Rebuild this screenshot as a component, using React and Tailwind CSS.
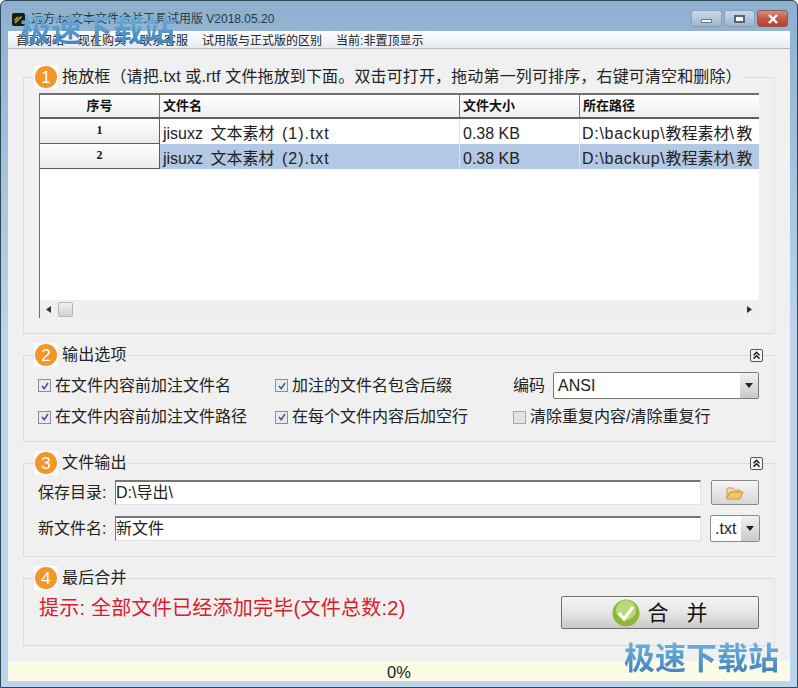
import React from 'react'

const cjk = "font-['Liberation_Sans','Noto_Sans_CJK_SC',sans-serif]"

const Badge = ({ n }) => (
	<span className="flex h-[24px] w-[24px] shrink-0 items-center justify-center bg-[#fbfbfb]">
		<span className="flex h-[22px] w-[22px] items-center justify-center rounded-full bg-[#f0962a] text-[17px] leading-none text-white">
			{n}
		</span>
	</span>
)

const Collapse = () => (
	<span className="flex h-[13px] w-[13px] items-center justify-center rounded-[2px] border border-[#555] bg-[#f4f4f4]">
		<svg width="9" height="9" viewBox="0 0 9 9" fill="none" stroke="#222" strokeWidth="1.5">
			<path d="M1.5 4.2 4.5 1.4 7.5 4.2M1.5 7.6 4.5 4.8 7.5 7.6" />
		</svg>
	</span>
)

// group box, the title row sits on the top border
const Group = ({ n, title, collapse, className, children }) => (
	<div className={`mx-[15px] border border-[#dcdcdc] border-r-[#e3e3e3] ${className}`}>
		<div className="-mt-[13px] flex h-[24px] items-center justify-between pr-[11px]">
			<div className="ml-[10px] flex items-center gap-[4px] bg-[#f0f0f0] pr-[1px]">
				<Badge n={n} />
				<span className="text-[16px] leading-[22px] tracking-[0.14px] text-[#222]">{title}</span>
			</div>
			{collapse && <Collapse />}
		</div>
		{children}
	</div>
)

const Check = ({ on, label, className }) => (
	<label className={`flex items-center gap-[4px] text-[16px] leading-[20px] text-[#222] ${className}`}>
		<span className={`flex h-[13px] w-[13px] items-center justify-center border ${on ? 'border-[#8a8f99] bg-[#e6eaf2]' : 'border-[#a8a8a8] bg-[#e2e2e2]'}`}>
			{on && (
				<svg width="10" height="10" viewBox="0 0 10 10" fill="none" stroke="#4a5a80" strokeWidth="1.6">
					<path d="M2 5 4.2 7.6 8 2" />
				</svg>
			)}
		</span>
		{label}
	</label>
)

const Arrow = () => (
	<span className="flex h-full w-[18px] items-center justify-center bg-gradient-to-b from-[#f2f2f2] to-[#c9c9c9]">
		<svg width="8" height="5" viewBox="0 0 8 5"><path d="M0 0h8L4 5z" fill="#222" /></svg>
	</span>
)

const rows = [
	{ id: 1, ext: '(1).txt' },
	{ id: 2, ext: '(2).txt', selected: true },
]

const FileTable = () => (
	<div className="ml-[15px] mr-[15px] mt-[4px] flex h-[225px] flex-col overflow-hidden border-l border-l-[#6f6f6f] border-t-2 border-t-[#6f6f6f] bg-white">
		<div className="flex h-[24px] shrink-0 border-b-2 border-b-[#5d5d5d] bg-gradient-to-b from-white to-[#eeeeee] text-[13px] font-bold leading-[22px] text-[#111]">
			<div className="w-[120px] border-r border-r-[#777] text-center">序号</div>
			<div className="w-[300px] border-r border-r-[#777] pl-[3px]">文件名</div>
			<div className="w-[120px] border-r border-r-[#777] pl-[3px]">文件大小</div>
			<div className="flex-1 pl-[3px]">所在路径</div>
		</div>
		{rows.map((row) => (
			<div key={row.id} className="flex h-[25px] shrink-0 text-[16px] leading-[29px] text-[#222]">
				<div className="w-[120px] shrink-0 border-b border-r border-[#5d5d5d] bg-gradient-to-b from-white to-[#ececec] text-center font-['Liberation_Serif'] text-[12px] font-bold leading-[22px] text-[#111]">
					{row.id}
				</div>
				<div className={`flex min-w-0 flex-1 ${row.selected ? 'bg-[#b3c8e4]' : 'bg-white'}`}>
					<div className="w-[300px] shrink-0 border-r border-r-[#e4e4e4] pl-[3px] [word-spacing:3px]">
						jisuxz 文本素材 <span className="tracking-[1px]">{row.ext}</span>
					</div>
					<div className="w-[120px] shrink-0 border-r border-r-[#e4e4e4] pl-[3px]">0.38 KB</div>
					<div className="min-w-0 flex-1 whitespace-nowrap pl-[2px]">
						<span className="tracking-[0.7px]">D:\backup\</span>教程素材<span className="tracking-[2.5px]">\</span>教
					</div>
				</div>
			</div>
		))}
		<div className="flex-1" />
		<div className="flex h-[18px] shrink-0 items-center bg-[#efefef] pl-[6px] pr-[7px] shadow-[0_1px_0_#e0e0e0]">
			<svg width="5" height="7" viewBox="0 0 5 7"><path d="M5 0v7L0 3.5z" fill="#333" /></svg>
			<span className="ml-[7px] h-[15px] w-[15px] rounded-[2px] border border-[#b5b5b5] bg-gradient-to-b from-[#f2f2f2] to-[#cfcfcf]" />
			<span className="flex-1" />
			<svg width="5" height="7" viewBox="0 0 5 7"><path d="M0 0v7l5-3.5z" fill="#333" /></svg>
		</div>
	</div>
)

const TextField = ({ value }) => (
	<div className="h-[25px] w-[586px] border-b border-l border-r border-t-2 border-b-[#e2e2e2] border-l-[#777] border-r-[#e2e2e2] border-t-[#777] bg-white text-[16px] leading-[21px] text-[#222]">
		{value}
	</div>
)

const Titlebar = () => (
	<div className="flex h-[30px] shrink-0 items-start justify-between pl-[11px] pr-[9px] pt-[9px]">
		<div className="mt-[1px] flex items-center gap-[6px]">
			<span className="flex h-[13px] w-[13px] items-center justify-center rounded-[2px] bg-[#1c1c14]">
				<svg width="11" height="11" viewBox="0 0 11 11" fill="none" stroke="#c9b93a" strokeWidth="1.4">
					<path d="M2 9 8.5 2.5M1.5 6.5 5 3" />
				</svg>
			</span>
			<span className="text-[12px] leading-[16px] text-[#2a3a4a]">远方.txt文本文件合并工具试用版 V2018.05.20</span>
		</div>
		<div className="flex gap-[2px]">
			<span className="flex h-[17px] w-[31px] items-center justify-center rounded-[3px] border border-[#8ca0b8] bg-gradient-to-b from-[#c9d8e8] via-[#b4c8dc] to-[#9db4cc]">
				<span className="mt-[4px] h-[4px] w-[11px] border border-[#6b7c90] bg-white" />
			</span>
			<span className="flex h-[17px] w-[31px] items-center justify-center rounded-[3px] border border-[#8ca0b8] bg-gradient-to-b from-[#c9d8e8] via-[#b4c8dc] to-[#9db4cc]">
				<span className="flex h-[8px] w-[11px] items-center justify-center border-2 border-[#55657a] bg-white" />
			</span>
			<span className="flex h-[17px] w-[31px] items-center justify-center rounded-[3px] border border-[#8f5a50] bg-gradient-to-b from-[#d0907f] via-[#c05a45] to-[#b8432f]">
				<svg width="12" height="10" viewBox="0 0 12 10" fill="none" stroke="#fff" strokeWidth="2.4">
					<path d="M2 1 10 9M10 1 2 9" />
				</svg>
			</span>
		</div>
	</div>
)

const menu = ['首页网站', '现在购买', '联系客服', '试用版与正式版的区别', '当前:非置顶显示']

const Watermark = ({ className }) => (
	<div className={`pointer-events-none absolute bg-gradient-to-b from-[#6db4dc] to-[#3f7cb8] bg-clip-text text-[31px] font-bold leading-[36px] text-transparent ${className}`}>
		极速下载站
	</div>
)

const App = () => {
	return (
		<div className={`relative flex h-[688px] w-[798px] flex-col overflow-hidden rounded-t-[6px] border border-[#2b4a55] bg-gradient-to-b from-[#8eb0cf] via-[#bdd5ec] to-[#bdd5ec] to-[30px] ${cjk}`}>
			<Titlebar />
			<div className="mx-[7px] flex h-[650px] flex-col bg-[#f0f0f0]">
				<div className="flex h-[18px] shrink-0 gap-[14px] border-b border-b-[#b8bcc2] bg-gradient-to-b from-white to-[#e6ebf3] pl-[8px] text-[12px] leading-[20px] text-[#222]">
					{menu.map((item) => (
						<span key={item}>{item}</span>
					))}
				</div>

				<Group n="1" title="拖放框（请把.txt 或.rtf 文件拖放到下面。双击可打开，拖动第一列可排序，右键可清空和删除）" className="mt-[28px] h-[257px]">
					<FileTable />
				</Group>

				<Group n="2" title="输出选项" collapse className="mt-[21px] h-[87px]">
					<div className="mt-[5px] grid grid-cols-[237px_238px_1fr] pl-[14px] pr-[15px]">
						<Check on label="在文件内容前加注文件名" className="h-[27px]" />
						<Check on label="加注的文件名包含后缀" className="h-[27px]" />
						<div className="flex h-[27px] items-center gap-[8px] text-[16px] text-[#222]">
							编码
							<div className="flex h-[27px] flex-1 items-center justify-between overflow-hidden rounded-[2px] border border-[#777] bg-white pl-[4px]">
								ANSI
								<Arrow />
							</div>
						</div>
						<Check on label="在文件内容前加注文件路径" className="mt-[8px] h-[20px]" />
						<Check on label="在每个文件内容后加空行" className="mt-[8px] h-[20px]" />
						<Check label="清除重复内容/清除重复行" className="mt-[8px] h-[20px]" />
					</div>
				</Group>

				<Group n="3" title="文件输出" collapse className="mt-[21px] h-[94px]">
					<div className="mt-[5px] flex flex-col gap-[10px] pl-[14px]">
						<div className="flex items-center">
							<span className="w-[77px] text-[16px] leading-[25px] text-[#222]">保存目录:</span>
							<TextField value="D:\导出\" />
							<span className="ml-[10px] flex h-[25px] w-[48px] items-center justify-center rounded-[2px] border border-[#8a8a8a] bg-gradient-to-b from-[#f6f6f6] to-[#d6d6d6]">
								<svg width="18" height="14" viewBox="0 0 18 14">
									<path d="M1 2h6l2 2h5v2H4L1 12z" fill="#f7dd9c" stroke="#c9a050" />
									<path d="M4 6h13l-3 7H1z" fill="#f6c765" stroke="#c9963f" />
								</svg>
							</span>
						</div>
						<div className="flex items-center">
							<span className="w-[77px] text-[16px] leading-[25px] text-[#222]">新文件名:</span>
							<TextField value="新文件" />
							<div className="ml-[9px] flex h-[27px] w-[50px] items-center justify-between overflow-hidden rounded-[2px] border border-[#8a8a8a] bg-white pl-[4px] text-[16px] text-[#222]">
								.txt
								<Arrow />
							</div>
						</div>
					</div>
				</Group>

				<Group n="4" title="最后合并" className="mt-[21px] h-[68px]">
					<div className="flex items-start justify-between pl-[15px] pr-[15px]">
						<span className="mt-[4px] text-[20px] leading-[28px] tracking-[0.25px] text-[#d8202c]">提示: 全部文件已经添加完毕(文件总数:2)</span>
						<span className="mt-[6px] flex h-[33px] w-[198px] items-center justify-center gap-[7px] rounded-[2px] border border-[#6f6f6f] bg-gradient-to-b from-[#f4f4f4] via-[#e6e6e6] to-[#c9c9c9]">
							<svg width="28" height="28" viewBox="0 0 28 28">
								<circle cx="14" cy="14" r="13.5" fill="#8db83a" />
								<circle cx="14" cy="11" r="10" fill="#b9d97a" />
								<path d="M7 14 12 20 21 8" fill="none" stroke="#fff" strokeWidth="3" />
							</svg>
							<span className="font-['Liberation_Serif','Noto_Sans_CJK_SC',serif] text-[21px] leading-[28px] text-[#111] [word-spacing:13px]">合 并</span>
						</span>
					</div>
				</Group>

				<div className="mt-[15px] h-[20px] shrink-0 bg-[#fbfbe6] text-center text-[16.5px] leading-[22px] text-[#222]">0%</div>
			</div>
			<Watermark className="left-[19px] top-[12px]" />
			<Watermark className="left-[623px] top-[640px]" />
		</div>
	)
}

export default App
